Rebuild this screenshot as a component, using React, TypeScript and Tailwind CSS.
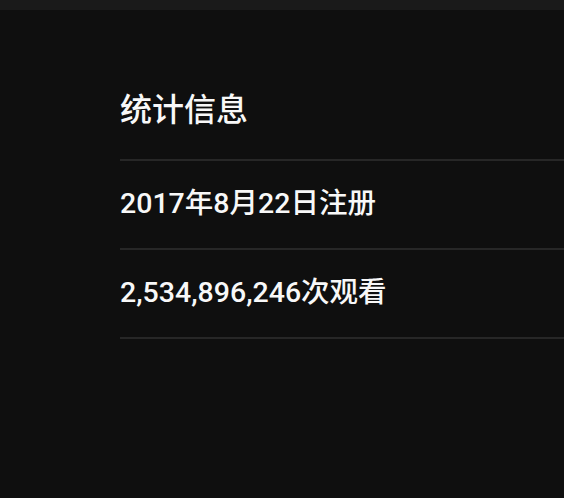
export default function App() {
  const font = { fontFamily: 'Roboto, "Noto Sans CJK SC", sans-serif' };
  return (
    <div className="min-h-[498px] w-full bg-[#0f0f0f] text-[#f8f8f8]" style={font}>
      <div className="h-[10px] bg-[#1a1a1a]" />
      <div className="pl-[120px]">
        <div className="mt-[78px] pb-[27px] border-b-2 border-[#272727]">
          <h2 className="text-[32px] leading-[44px] font-medium">统计信息</h2>
        </div>
        <div className="pt-[23px] pb-[24px] border-b-2 border-[#272727]">
          <div className="text-[28.5px] leading-[40px] font-medium">2017年8月22日注册</div>
        </div>
        <div className="pt-[23px] pb-[24px] border-b-2 border-[#272727]">
          <div className="text-[28.5px] leading-[40px] font-medium">2,534,896,246次观看</div>
        </div>
      </div>
    </div>
  );
}
